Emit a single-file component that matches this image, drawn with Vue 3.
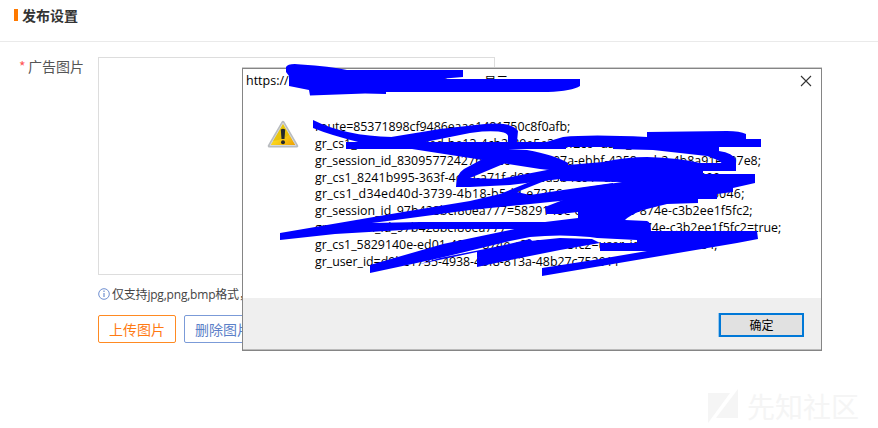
<script setup>
const lines = [
  { text: 'route=85371898cf9486eaae1481750c8f0afb;', gap: -0.05 },
  { text: 'gr_cs1_a68df751-4ded-be13-4cb2-89e5e30bf2c6=user_id:6002840117;', gap: 0 },
  { text: 'gr_session_id_83095772427b69e6=2d07c07a-ebbf-4358-acb2-4b8a91e907e8;', gap: 0.02 },
  { text: 'gr_cs1_8241b995-363f-4c2a-a71f-d9228a3b4e91=user_id:2800476899', gap: 0.07 },
  { text: 'gr_cs1_d34ed40d-3739-4b18-b5dd-e7356a1c20e5=user_id:2890606046;', gap: 0.28 },
  { text: 'gr_session_id_97b428bcf80ea777=5829140e-ed01-4289-874e-c3b2ee1f5fc2;', gap: 0.01 },
  { text: 'gr_session_id_97b428bcf80ea777_5829140e-ed01-4289-874e-c3b2ee1f5fc2=true;', gap: 0 },
  { text: 'gr_cs1_5829140e-ed01-4289-874e-c3b2ee1f5fc2=user_id:2624484484;', gap: 0 },
  { text: 'gr_user_id=d9be1735-4938-4bf8-813a-48b27c752911', gap: -0.03 },
]
</script>

<template>
  <div class="page">
    <header class="head"><i class="bar"></i><h1>发布设置</h1></header>
    <main class="form">
      <label class="label"><b>*</b>广告图片</label>
      <div class="field">
        <div class="preview"></div>
        <p class="hint">
          <svg width="12" height="12" viewBox="0 0 12 12"><circle cx="6" cy="6" r="5.3" fill="none" stroke="#6f8fd0" /><path d="M6 5v4M6 2.6v1.3" stroke="#6f8fd0" stroke-width="1.2" /></svg>
          <span>仅支持jpg,png,bmp格式，</span>
        </p>
        <div class="actions"><button class="upload">上传图片</button><button class="remove">删除图片</button></div>
      </div>
    </main>

    <div class="mark">
      <svg width="30" height="34" viewBox="0 0 30 34"><path d="M0 4H22L0 34ZM30 0V29H8Z" fill="#f5f5f5" /></svg>
      <span>先知社区</span>
    </div>

    <section class="dialog">
      <div class="title">
        <span class="url">https://</span><span class="says">www.example.com 显示:</span>
        <svg class="close" width="12" height="12" viewBox="0 0 12 12"><path d="M1 1L11 11M11 1L1 11" stroke="#333" stroke-width="1.1" /></svg>
      </div>
      <div class="content">
        <svg class="warn" width="32" height="29" viewBox="0 0 32 29">
          <defs>
            <linearGradient id="gold" x1="0" y1="0" x2="1" y2="1"><stop offset="0" stop-color="#f5df20" /><stop offset=".5" stop-color="#fbd51c" /><stop offset="1" stop-color="#ee9d00" /></linearGradient>
          </defs>
          <path d="M16 2.3L29.8 26H2.2Z" fill="#b9bcc0" stroke="#b9bcc0" stroke-width="3" stroke-linejoin="round" />
          <path d="M16 3L29 25.5H3Z" fill="url(#gold)" stroke="#d5d8dc" stroke-width="1" stroke-linejoin="round" />
          <path d="M16 4.5L22 15Q15 20 6 21Z" fill="#d8b400" opacity=".5" />
          <path d="M13.8 9.5Q16 8 18.2 9.5L17.5 19H14.5Z" fill="#24282c" /><circle cx="16" cy="22.3" r="2" fill="#24282c" />
        </svg>
        <div class="lines">
          <div v-for="(l, i) in lines" :key="i" :style="{ letterSpacing: l.gap + 'px' }">{{ l.text }}</div>
        </div>
      </div>
      <footer><button class="ok">确定</button></footer>
    </section>

    <svg class="ink" width="878" height="428" viewBox="0 0 878 428">
      <path d="M286 72V67Q288 63 301 64.5Q330 66 347 70H463V77L445 78.5V79H580V86Q572 91 548 92H386V94L365 93.5L310 95.5L309 90L289 86V76Z" />
      <path d="M313 120Q345 136 392 137L430 142L362 143Q330 135 313 128Z" />
      <path d="M346 142H566V149H346Z" />
      <path d="M385 138L440 129L480 124.5Q512 121 518 131L517 142H508L508 137Q509 130 482 131.5L470 133L420 143H390Z" />
      <path d="M543 143L563 137Q590 134 647 137V132L727 131Q740 131 746 134V139H761V147H719V151Q733 153 736 160V170L703 170L722 164Q722 161 707 156L653 150L613 149V147H543Z" />
      <path d="M395 145L440 148H492L527 150Q555 155 568 163V172L540 169L470 158L412 149Z" />
      <path d="M490 155L464 169Q456 174 456 187L470 187L510 185L560 179L572 168L547 170L500 179L470 178L508 162Z" />
      <path d="M280 233L403 212L470 201L500 194L547 175L570 170L547 180L517 192L530 195L563 190L613 183V196L560 201L470 210L403 219L372 223L420 222H580V229H420L335 234L280 240Z" />
      <path d="M560 166L568 165L603 162Q627 157 647 157Q680 158 700 163H724L736 168V171H703V174H755V183L733 188V192L717 194V199H698V203L667 204L643 210Q630 215 625 220L647 221Q651 222 651 231H757L758 239L737 243L542 276V268L600 259L647 251H600V243L637 243L637 240L597 238L590 237Q560 234 530 237L510 241L440 258L370 273V265L443 244L510 230L545 222L578 218V212L560 214H546L545 207L568 198V190L622 182L560 181Z" />
      <path d="M477 258L500 251L530 241L560 238L592 239L600 243L577 247L560 250L520 258L477 267Z" />
      <path d="M420 264L440 258L500 246L530 239L540 248L477 258V252Z" />
    </svg>
  </div>
</template>

<style>
body { margin: 0; overflow: hidden; background: #fff; }
</style>
<style scoped>
* { box-sizing: border-box; }
.page { position: relative; width: 878px; height: 428px; overflow: hidden; font-family: "Open Sans", "Noto Sans CJK SC", sans-serif; }
.head { display: flex; align-items: center; height: 42px; padding: 0 0 11px 14px; border-bottom: 1px solid #eaeaea; }
.bar { width: 4px; height: 12px; margin: -1px 4px 0 0; background: #ff7a00; }
h1 { margin: 0; font: bold 14px/20px "Noto Sans CJK SC", sans-serif; color: #333; }
.form { display: flex; padding: 15px 0 0 19px; }
.label { width: 79px; margin-top: -1px; font: 14px/20px "Noto Sans CJK SC", sans-serif; color: #555; white-space: nowrap; }
.label b { display: inline-block; width: 9px; font-weight: normal; color: #ff5555; }
.field { width: 397px; }
.preview { height: 218px; border: 1px solid #ddd; }
.hint { display: flex; align-items: center; gap: 2px; height: 18px; margin: 10px 0 0; font-size: 12px; letter-spacing: -0.2px; color: #444; white-space: nowrap; }
.actions { display: flex; gap: 8px; margin-top: 12px; }
.actions button { width: 78px; height: 28px; padding: 0; border: 1px solid #ff8a22; border-radius: 2px; background: #fff; font: 14px/25px "Noto Sans CJK SC", sans-serif; color: #ff7a12; }
.actions .remove { border-color: #7b9bd8; color: #5b80c8; }
.mark { position: absolute; left: 708px; top: 389px; display: flex; align-items: center; gap: 9px; font: 28px/34px "Noto Sans CJK SC", sans-serif; color: #f5f5f5; }
.dialog { position: absolute; left: 242px; top: 68px; display: flex; flex-direction: column; width: 580px; height: 283px; border: 1px solid #858585; box-shadow: 0 -1px #ccc; background: #fff; color: #000; }
.title { display: flex; align-items: center; height: 23px; padding: 0 9px 0 3px; font-size: 12px; }
.url { width: 129px; font-size: 12.5px; }
.says { white-space: nowrap; }
.close { margin-left: auto; }
.content { display: flex; flex: 1; padding: 27px 0 0 24px; }
.warn { margin-top: 1px; flex: none; }
.lines { margin-left: 16px; font-size: 12.4px; line-height: 16.85px; white-space: nowrap; }
footer { display: flex; justify-content: flex-end; height: 52px; padding: 15px 17px 0 0; border-bottom: 1px solid #bbb; background: #efefef; }
.ok { width: 85px; height: 24px; padding: 0; border: 2px solid #0078d7; box-shadow: -1px 0 #9ac8ed; background: #e1e1e1; font: 12px/18px "Noto Sans CJK SC", sans-serif; color: #000; }
.ink { position: absolute; left: 0; top: 0; fill: #00f; }
</style>
